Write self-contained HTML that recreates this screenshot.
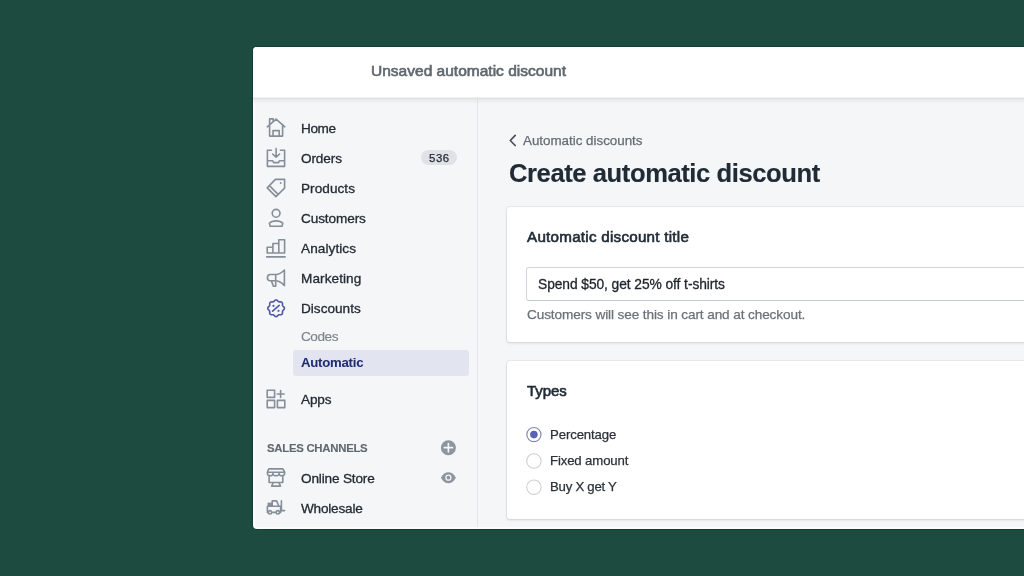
<!DOCTYPE html>
<html><head><meta charset="utf-8">
<style>
*{margin:0;padding:0;box-sizing:border-box}
html,body{width:1024px;height:576px;overflow:hidden;background:#1e4b3f;font-family:"Liberation Sans",sans-serif;position:relative}
.b{position:absolute}
.t{position:absolute;white-space:nowrap;line-height:1;will-change:transform}
.ov{position:absolute;left:0;top:0}
</style></head><body>
<div class="b" style="left:251.5px;top:45.5px;width:800px;height:484px;border-radius:5px;background:rgba(0,20,10,.25)"></div>
<div class="b" style="left:253px;top:47px;width:800px;height:481.5px;border-radius:4px;background:#fbfdfd;overflow:hidden">
  <div class="b" style="left:2px;top:50px;width:798px;height:429.5px;background:#f4f6f8"></div>
  <div class="b" style="left:223.5px;top:50px;width:1px;height:429.5px;background:#e3e6e9"></div>
  <div class="b" style="left:0;top:52px;width:800px;height:5px;background:linear-gradient(rgba(0,0,0,.055),rgba(0,0,0,0))"></div>
  <div class="b" style="left:0;top:0;width:800px;height:50px;background:#fff"></div>
  <div class="b" style="left:0;top:50px;width:800px;height:1px;background:#f0f1f3"></div>
  <div class="b" style="left:0;top:51px;width:800px;height:1px;background:#dfe1e4"></div>
</div>
<div class="b" style="left:293px;top:349.6px;width:176px;height:26px;border-radius:3px;background:#e2e5f0"></div>
<div class="b" style="left:421px;top:149.5px;width:36px;height:15px;border-radius:8px;background:#dfe3e8"></div>
<div class="b" style="left:507px;top:207px;width:600px;height:135px;border-radius:3px;background:#fff;box-shadow:0 0 0 1px rgba(63,63,68,.06),0 1px 3px rgba(63,63,68,.16)"></div>
<div class="b" style="left:507px;top:360.6px;width:600px;height:158.4px;border-radius:3px;background:#fff;box-shadow:0 0 0 1px rgba(63,63,68,.06),0 1px 3px rgba(63,63,68,.16)"></div>
<div class="b" style="left:526.4px;top:267px;width:600px;height:34px;border-radius:3px;background:#fff;border:1px solid #d2d6da;border-bottom-color:#c4c9ce"></div>
<div class="t" style="left:370.70px;top:63.38px;font-size:15.5px;font-weight:normal;color:#5f676f;letter-spacing:0.012px;-webkit-text-stroke:0.65px #5f676f;">Unsaved automatic discount</div>
<div class="t" style="left:300.50px;top:121.78px;font-size:13.6px;font-weight:normal;color:#232b34;letter-spacing:-0.433px;-webkit-text-stroke:0.3px #232b34;">Home</div>
<div class="t" style="left:300.50px;top:151.78px;font-size:13.6px;font-weight:normal;color:#232b34;letter-spacing:-0.120px;-webkit-text-stroke:0.3px #232b34;">Orders</div>
<div class="t" style="left:300.50px;top:181.88px;font-size:13.6px;font-weight:normal;color:#232b34;letter-spacing:0.043px;-webkit-text-stroke:0.3px #232b34;">Products</div>
<div class="t" style="left:300.50px;top:211.88px;font-size:13.6px;font-weight:normal;color:#232b34;letter-spacing:-0.100px;-webkit-text-stroke:0.3px #232b34;">Customers</div>
<div class="t" style="left:300.50px;top:241.88px;font-size:13.6px;font-weight:normal;color:#232b34;letter-spacing:0.075px;-webkit-text-stroke:0.3px #232b34;">Analytics</div>
<div class="t" style="left:300.50px;top:271.88px;font-size:13.6px;font-weight:normal;color:#232b34;letter-spacing:0.075px;-webkit-text-stroke:0.3px #232b34;">Marketing</div>
<div class="t" style="left:300.50px;top:302.28px;font-size:13.6px;font-weight:normal;color:#232b34;letter-spacing:0.012px;-webkit-text-stroke:0.3px #232b34;">Discounts</div>
<div class="t" style="left:300.50px;top:392.68px;font-size:13.6px;font-weight:normal;color:#232b34;letter-spacing:-0.167px;-webkit-text-stroke:0.3px #232b34;">Apps</div>
<div class="t" style="left:300.50px;top:471.88px;font-size:13.6px;font-weight:normal;color:#232b34;letter-spacing:-0.164px;-webkit-text-stroke:0.3px #232b34;">Online Store</div>
<div class="t" style="left:300.50px;top:501.98px;font-size:13.6px;font-weight:normal;color:#232b34;letter-spacing:-0.213px;-webkit-text-stroke:0.3px #232b34;">Wholesale</div>
<div class="t" style="left:300.50px;top:330.28px;font-size:13.6px;font-weight:normal;color:#7b838b;letter-spacing:-0.450px;-webkit-text-stroke:0.15px #7b838b;">Codes</div>
<div class="t" style="left:301.00px;top:356.42px;font-size:13.2px;font-weight:bold;color:#222c70;letter-spacing:-0.250px;-webkit-text-stroke:0.05px #222c70;">Automatic</div>
<div class="t" style="left:267.20px;top:442.75px;font-size:11.4px;font-weight:bold;color:#60686f;letter-spacing:-0.285px;-webkit-text-stroke:0.1px #60686f;">SALES CHANNELS</div>
<div class="t" style="left:429.30px;top:152.55px;font-size:11.4px;font-weight:normal;color:#1f262e;letter-spacing:0.600px;-webkit-text-stroke:0.25px #1f262e;">536</div>
<div class="t" style="left:523.10px;top:134.45px;font-size:13.4px;font-weight:normal;color:#646c74;letter-spacing:-0.017px;-webkit-text-stroke:0.25px #646c74;">Automatic discounts</div>
<div class="t" style="left:508.70px;top:160.52px;font-size:25.6px;font-weight:bold;color:#212b36;letter-spacing:-0.425px;-webkit-text-stroke:0.15px #212b36;">Create automatic discount</div>
<div class="t" style="left:527.00px;top:228.83px;font-size:15.2px;font-weight:normal;color:#212b36;letter-spacing:0.248px;-webkit-text-stroke:0.6px #212b36;">Automatic discount title</div>
<div class="t" style="left:538.40px;top:278.12px;font-size:13.8px;font-weight:normal;color:#1f252c;letter-spacing:-0.073px;-webkit-text-stroke:0.3px #1f252c;">Spend $50, get 25% off t-shirts</div>
<div class="t" style="left:526.80px;top:307.68px;font-size:13.6px;font-weight:normal;color:#697179;letter-spacing:-0.106px;-webkit-text-stroke:0.25px #697179;">Customers will see this in cart and at checkout.</div>
<div class="t" style="left:527.00px;top:383.20px;font-size:15px;font-weight:normal;color:#212b36;letter-spacing:-0.075px;-webkit-text-stroke:0.6px #212b36;">Types</div>
<div class="t" style="left:549.50px;top:427.57px;font-size:13.2px;font-weight:normal;color:#2b3238;letter-spacing:-0.122px;-webkit-text-stroke:0.25px #2b3238;">Percentage</div>
<div class="t" style="left:549.50px;top:453.92px;font-size:13.2px;font-weight:normal;color:#2b3238;letter-spacing:-0.136px;-webkit-text-stroke:0.25px #2b3238;">Fixed amount</div>
<div class="t" style="left:549.50px;top:480.32px;font-size:13.2px;font-weight:normal;color:#2b3238;letter-spacing:-0.250px;-webkit-text-stroke:0.25px #2b3238;">Buy X get Y</div>

<svg class="ov" width="1024" height="576" viewBox="0 0 1024 576" fill="none" stroke="#868f99" stroke-width="1.6" stroke-linejoin="round" stroke-linecap="round">
<!-- home -->
<path d="M267.3 126.8 L276.1 119.2 L284.8 126.8 M269.6 124.6 V136.1 H282.6 V124.6 M269.6 124.6 V118.9 H273.2 V121.6 M273 136.1 V130.6 H279.2 V136.1"/>
<!-- orders -->
<path d="M271.4 150.3 H267.4 V166.4 H284.6 V150.3 H280.4 M267.4 160.8 H272.8 L273.6 162.6 H278.6 L279.4 160.8 H284.6 M276.1 148.6 V157 M272.6 154 L276.1 157.2 L279.6 154"/>
<!-- products -->
<path d="M275.4 179.4 H284.6 V188.2 L275.9 196.6 L267.2 187.9 Z M270.4 186.6 L277.4 193.6"/>
<circle cx="280.7" cy="183" r="0.9" fill="#868f99" stroke="none"/>
<!-- customers -->
<circle cx="276.1" cy="213.3" r="3.9"/>
<path d="M270.2 226.2 H282 L282.8 223.3 C281.3 221.7 279 220.9 276.1 220.9 C273.2 220.9 270.9 221.7 269.4 223.3 Z"/>
<!-- analytics -->
<path d="M267.2 253 V247.2 H272.9 V253 Z M272.9 253 V243.5 H278.8 V253 M278.8 253 V239.8 H284.6 V253 H267.2"/>
<path d="M266.8 256.9 H285" stroke-width="1.9"/>
<!-- marketing -->
<path d="M284.4 270 V285.6 C281 282 278 280.8 275.6 280.8 H270.2 C268.4 280.8 267.4 279.4 267.4 277.8 C267.4 276 268.4 274.5 270.2 274.5 H276.4 C279 274.5 281.6 272.6 284.4 270 Z M275.7 274.6 V286.2 H273.4 L271.4 280.9"/>
<!-- discounts -->
<path stroke="#525aa6" d="M276.10 299.95 L276.14 299.95 L276.17 299.95 L276.21 299.95 L276.25 299.96 L276.28 299.96 L276.32 299.97 L276.35 299.97 L276.39 299.98 L276.43 299.99 L276.46 300.00 L276.50 300.01 L276.53 300.02 L276.57 300.03 L276.61 300.04 L276.64 300.05 L276.68 300.07 L276.71 300.08 L276.75 300.10 L276.78 300.12 L276.81 300.13 L276.85 300.15 L276.88 300.17 L276.92 300.19 L276.95 300.21 L276.98 300.23 L277.02 300.25 L277.05 300.27 L277.08 300.30 L277.12 300.32 L277.15 300.34 L277.18 300.37 L277.21 300.39 L277.24 300.42 L277.27 300.44 L277.31 300.47 L277.34 300.50 L277.37 300.52 L277.40 300.55 L277.43 300.58 L277.46 300.61 L277.49 300.63 L277.52 300.66 L277.54 300.69 L277.57 300.72 L277.60 300.75 L277.63 300.78 L277.66 300.81 L277.69 300.83 L277.71 300.86 L277.74 300.89 L277.77 300.92 L277.80 300.95 L277.82 300.98 L277.85 301.01 L277.88 301.04 L277.90 301.06 L277.93 301.09 L277.96 301.12 L277.98 301.15 L278.01 301.18 L278.03 301.20 L278.06 301.23 L278.09 301.26 L278.11 301.28 L278.14 301.31 L278.16 301.33 L278.19 301.36 L278.21 301.38 L278.24 301.41 L278.27 301.43 L278.29 301.45 L278.32 301.48 L278.34 301.50 L278.37 301.52 L278.39 301.54 L278.42 301.56 L278.45 301.58 L278.47 301.60 L278.50 301.62 L278.52 301.64 L278.55 301.66 L278.58 301.67 L278.60 301.69 L278.63 301.70 L278.66 301.72 L278.69 301.73 L278.71 301.75 L278.74 301.76 L278.77 301.77 L278.80 301.79 L278.83 301.80 L278.86 301.81 L278.88 301.82 L278.91 301.83 L278.94 301.84 L278.97 301.85 L279.00 301.85 L279.03 301.86 L279.06 301.87 L279.10 301.88 L279.13 301.88 L279.16 301.89 L279.19 301.89 L279.22 301.90 L279.26 301.90 L279.29 301.90 L279.32 301.91 L279.36 301.91 L279.39 301.91 L279.43 301.91 L279.46 301.91 L279.50 301.91 L279.53 301.91 L279.57 301.92 L279.60 301.92 L279.64 301.92 L279.68 301.92 L279.71 301.91 L279.75 301.91 L279.79 301.91 L279.83 301.91 L279.86 301.91 L279.90 301.91 L279.94 301.91 L279.98 301.91 L280.02 301.91 L280.06 301.90 L280.10 301.90 L280.14 301.90 L280.18 301.90 L280.22 301.90 L280.26 301.90 L280.30 301.90 L280.34 301.90 L280.38 301.90 L280.42 301.90 L280.46 301.90 L280.50 301.90 L280.54 301.90 L280.58 301.90 L280.62 301.90 L280.66 301.90 L280.70 301.91 L280.74 301.91 L280.78 301.91 L280.82 301.91 L280.87 301.92 L280.91 301.92 L280.95 301.93 L280.99 301.93 L281.02 301.94 L281.06 301.95 L281.10 301.95 L281.14 301.96 L281.18 301.97 L281.22 301.98 L281.26 301.99 L281.30 302.00 L281.33 302.01 L281.37 302.02 L281.41 302.03 L281.44 302.05 L281.48 302.06 L281.51 302.07 L281.55 302.09 L281.58 302.10 L281.62 302.12 L281.65 302.14 L281.68 302.15 L281.71 302.17 L281.75 302.19 L281.78 302.21 L281.81 302.23 L281.84 302.25 L281.87 302.28 L281.90 302.30 L281.92 302.32 L281.95 302.35 L281.98 302.37 L282.00 302.40 L282.03 302.42 L282.05 302.45 L282.08 302.48 L282.10 302.50 L282.12 302.53 L282.15 302.56 L282.17 302.59 L282.19 302.62 L282.21 302.65 L282.23 302.69 L282.25 302.72 L282.26 302.75 L282.28 302.78 L282.30 302.82 L282.31 302.85 L282.33 302.89 L282.34 302.92 L282.35 302.96 L282.37 302.99 L282.38 303.03 L282.39 303.07 L282.40 303.10 L282.41 303.14 L282.42 303.18 L282.43 303.22 L282.44 303.26 L282.45 303.30 L282.45 303.34 L282.46 303.38 L282.47 303.41 L282.47 303.45 L282.48 303.49 L282.48 303.53 L282.49 303.58 L282.49 303.62 L282.49 303.66 L282.49 303.70 L282.50 303.74 L282.50 303.78 L282.50 303.82 L282.50 303.86 L282.50 303.90 L282.50 303.94 L282.50 303.98 L282.50 304.02 L282.50 304.06 L282.50 304.10 L282.50 304.14 L282.50 304.18 L282.50 304.22 L282.50 304.26 L282.50 304.30 L282.50 304.34 L282.49 304.38 L282.49 304.42 L282.49 304.46 L282.49 304.50 L282.49 304.54 L282.49 304.57 L282.49 304.61 L282.49 304.65 L282.49 304.69 L282.48 304.72 L282.48 304.76 L282.48 304.80 L282.48 304.83 L282.49 304.87 L282.49 304.90 L282.49 304.94 L282.49 304.97 L282.49 305.01 L282.49 305.04 L282.49 305.08 L282.50 305.11 L282.50 305.14 L282.50 305.18 L282.51 305.21 L282.51 305.24 L282.52 305.27 L282.52 305.30 L282.53 305.34 L282.54 305.37 L282.55 305.40 L282.55 305.43 L282.56 305.46 L282.57 305.49 L282.58 305.52 L282.59 305.54 L282.60 305.57 L282.61 305.60 L282.63 305.63 L282.64 305.66 L282.65 305.69 L282.67 305.71 L282.68 305.74 L282.70 305.77 L282.71 305.80 L282.73 305.82 L282.74 305.85 L282.76 305.88 L282.78 305.90 L282.80 305.93 L282.82 305.95 L282.84 305.98 L282.86 306.01 L282.88 306.03 L282.90 306.06 L282.92 306.08 L282.95 306.11 L282.97 306.13 L282.99 306.16 L283.02 306.19 L283.04 306.21 L283.07 306.24 L283.09 306.26 L283.12 306.29 L283.14 306.31 L283.17 306.34 L283.20 306.37 L283.22 306.39 L283.25 306.42 L283.28 306.44 L283.31 306.47 L283.34 306.50 L283.36 306.52 L283.39 306.55 L283.42 306.58 L283.45 306.60 L283.48 306.63 L283.51 306.66 L283.54 306.69 L283.57 306.71 L283.59 306.74 L283.62 306.77 L283.65 306.80 L283.68 306.83 L283.71 306.86 L283.74 306.88 L283.77 306.91 L283.79 306.94 L283.82 306.97 L283.85 307.00 L283.88 307.03 L283.90 307.06 L283.93 307.09 L283.96 307.13 L283.98 307.16 L284.01 307.19 L284.03 307.22 L284.06 307.25 L284.08 307.28 L284.10 307.32 L284.13 307.35 L284.15 307.38 L284.17 307.42 L284.19 307.45 L284.21 307.48 L284.23 307.52 L284.25 307.55 L284.27 307.59 L284.28 307.62 L284.30 307.65 L284.32 307.69 L284.33 307.72 L284.35 307.76 L284.36 307.79 L284.37 307.83 L284.38 307.87 L284.39 307.90 L284.40 307.94 L284.41 307.97 L284.42 308.01 L284.43 308.05 L284.43 308.08 L284.44 308.12 L284.44 308.15 L284.45 308.19 L284.45 308.23 L284.45 308.26 L284.45 308.30 L284.45 308.34 L284.45 308.37 L284.45 308.41 L284.44 308.45 L284.44 308.48 L284.43 308.52 L284.43 308.55 L284.42 308.59 L284.41 308.63 L284.40 308.66 L284.39 308.70 L284.38 308.73 L284.37 308.77 L284.36 308.81 L284.35 308.84 L284.33 308.88 L284.32 308.91 L284.30 308.95 L284.28 308.98 L284.27 309.01 L284.25 309.05 L284.23 309.08 L284.21 309.12 L284.19 309.15 L284.17 309.18 L284.15 309.22 L284.13 309.25 L284.10 309.28 L284.08 309.32 L284.06 309.35 L284.03 309.38 L284.01 309.41 L283.98 309.44 L283.96 309.47 L283.93 309.51 L283.90 309.54 L283.88 309.57 L283.85 309.60 L283.82 309.63 L283.79 309.66 L283.77 309.69 L283.74 309.72 L283.71 309.74 L283.68 309.77 L283.65 309.80 L283.62 309.83 L283.59 309.86 L283.57 309.89 L283.54 309.91 L283.51 309.94 L283.48 309.97 L283.45 310.00 L283.42 310.02 L283.39 310.05 L283.36 310.08 L283.34 310.10 L283.31 310.13 L283.28 310.16 L283.25 310.18 L283.22 310.21 L283.20 310.23 L283.17 310.26 L283.14 310.29 L283.12 310.31 L283.09 310.34 L283.07 310.36 L283.04 310.39 L283.02 310.41 L282.99 310.44 L282.97 310.47 L282.95 310.49 L282.92 310.52 L282.90 310.54 L282.88 310.57 L282.86 310.59 L282.84 310.62 L282.82 310.65 L282.80 310.67 L282.78 310.70 L282.76 310.72 L282.74 310.75 L282.73 310.78 L282.71 310.80 L282.70 310.83 L282.68 310.86 L282.67 310.89 L282.65 310.91 L282.64 310.94 L282.63 310.97 L282.61 311.00 L282.60 311.03 L282.59 311.06 L282.58 311.08 L282.57 311.11 L282.56 311.14 L282.55 311.17 L282.55 311.20 L282.54 311.23 L282.53 311.26 L282.52 311.30 L282.52 311.33 L282.51 311.36 L282.51 311.39 L282.50 311.42 L282.50 311.46 L282.50 311.49 L282.49 311.52 L282.49 311.56 L282.49 311.59 L282.49 311.63 L282.49 311.66 L282.49 311.70 L282.49 311.73 L282.48 311.77 L282.48 311.80 L282.48 311.84 L282.48 311.88 L282.49 311.91 L282.49 311.95 L282.49 311.99 L282.49 312.03 L282.49 312.06 L282.49 312.10 L282.49 312.14 L282.49 312.18 L282.49 312.22 L282.50 312.26 L282.50 312.30 L282.50 312.34 L282.50 312.38 L282.50 312.42 L282.50 312.46 L282.50 312.50 L282.50 312.54 L282.50 312.58 L282.50 312.62 L282.50 312.66 L282.50 312.70 L282.50 312.74 L282.50 312.78 L282.50 312.82 L282.50 312.86 L282.49 312.90 L282.49 312.94 L282.49 312.98 L282.49 313.02 L282.48 313.07 L282.48 313.11 L282.47 313.15 L282.47 313.19 L282.46 313.22 L282.45 313.26 L282.45 313.30 L282.44 313.34 L282.43 313.38 L282.42 313.42 L282.41 313.46 L282.40 313.50 L282.39 313.53 L282.38 313.57 L282.37 313.61 L282.35 313.64 L282.34 313.68 L282.33 313.71 L282.31 313.75 L282.30 313.78 L282.28 313.82 L282.26 313.85 L282.25 313.88 L282.23 313.91 L282.21 313.95 L282.19 313.98 L282.17 314.01 L282.15 314.04 L282.12 314.07 L282.10 314.10 L282.08 314.12 L282.05 314.15 L282.03 314.18 L282.00 314.20 L281.98 314.23 L281.95 314.25 L281.92 314.28 L281.90 314.30 L281.87 314.32 L281.84 314.35 L281.81 314.37 L281.78 314.39 L281.75 314.41 L281.71 314.43 L281.68 314.45 L281.65 314.46 L281.62 314.48 L281.58 314.50 L281.55 314.51 L281.51 314.53 L281.48 314.54 L281.44 314.55 L281.41 314.57 L281.37 314.58 L281.33 314.59 L281.30 314.60 L281.26 314.61 L281.22 314.62 L281.18 314.63 L281.14 314.64 L281.10 314.65 L281.06 314.65 L281.02 314.66 L280.99 314.67 L280.95 314.67 L280.91 314.68 L280.87 314.68 L280.82 314.69 L280.78 314.69 L280.74 314.69 L280.70 314.69 L280.66 314.70 L280.62 314.70 L280.58 314.70 L280.54 314.70 L280.50 314.70 L280.46 314.70 L280.42 314.70 L280.38 314.70 L280.34 314.70 L280.30 314.70 L280.26 314.70 L280.22 314.70 L280.18 314.70 L280.14 314.70 L280.10 314.70 L280.06 314.70 L280.02 314.69 L279.98 314.69 L279.94 314.69 L279.90 314.69 L279.86 314.69 L279.83 314.69 L279.79 314.69 L279.75 314.69 L279.71 314.69 L279.68 314.68 L279.64 314.68 L279.60 314.68 L279.57 314.68 L279.53 314.69 L279.50 314.69 L279.46 314.69 L279.43 314.69 L279.39 314.69 L279.36 314.69 L279.32 314.69 L279.29 314.70 L279.26 314.70 L279.22 314.70 L279.19 314.71 L279.16 314.71 L279.13 314.72 L279.10 314.72 L279.06 314.73 L279.03 314.74 L279.00 314.75 L278.97 314.75 L278.94 314.76 L278.91 314.77 L278.88 314.78 L278.86 314.79 L278.83 314.80 L278.80 314.81 L278.77 314.83 L278.74 314.84 L278.71 314.85 L278.69 314.87 L278.66 314.88 L278.63 314.90 L278.60 314.91 L278.58 314.93 L278.55 314.94 L278.52 314.96 L278.50 314.98 L278.47 315.00 L278.45 315.02 L278.42 315.04 L278.39 315.06 L278.37 315.08 L278.34 315.10 L278.32 315.12 L278.29 315.15 L278.27 315.17 L278.24 315.19 L278.21 315.22 L278.19 315.24 L278.16 315.27 L278.14 315.29 L278.11 315.32 L278.09 315.34 L278.06 315.37 L278.03 315.40 L278.01 315.42 L277.98 315.45 L277.96 315.48 L277.93 315.51 L277.90 315.54 L277.88 315.56 L277.85 315.59 L277.82 315.62 L277.80 315.65 L277.77 315.68 L277.74 315.71 L277.71 315.74 L277.69 315.77 L277.66 315.79 L277.63 315.82 L277.60 315.85 L277.57 315.88 L277.54 315.91 L277.52 315.94 L277.49 315.97 L277.46 315.99 L277.43 316.02 L277.40 316.05 L277.37 316.08 L277.34 316.10 L277.31 316.13 L277.27 316.16 L277.24 316.18 L277.21 316.21 L277.18 316.23 L277.15 316.26 L277.12 316.28 L277.08 316.30 L277.05 316.33 L277.02 316.35 L276.98 316.37 L276.95 316.39 L276.92 316.41 L276.88 316.43 L276.85 316.45 L276.81 316.47 L276.78 316.48 L276.75 316.50 L276.71 316.52 L276.68 316.53 L276.64 316.55 L276.61 316.56 L276.57 316.57 L276.53 316.58 L276.50 316.59 L276.46 316.60 L276.43 316.61 L276.39 316.62 L276.35 316.63 L276.32 316.63 L276.28 316.64 L276.25 316.64 L276.21 316.65 L276.17 316.65 L276.14 316.65 L276.10 316.65 L276.06 316.65 L276.03 316.65 L275.99 316.65 L275.95 316.64 L275.92 316.64 L275.88 316.63 L275.85 316.63 L275.81 316.62 L275.77 316.61 L275.74 316.60 L275.70 316.59 L275.67 316.58 L275.63 316.57 L275.59 316.56 L275.56 316.55 L275.52 316.53 L275.49 316.52 L275.45 316.50 L275.42 316.48 L275.39 316.47 L275.35 316.45 L275.32 316.43 L275.28 316.41 L275.25 316.39 L275.22 316.37 L275.18 316.35 L275.15 316.33 L275.12 316.30 L275.08 316.28 L275.05 316.26 L275.02 316.23 L274.99 316.21 L274.96 316.18 L274.93 316.16 L274.89 316.13 L274.86 316.10 L274.83 316.08 L274.80 316.05 L274.77 316.02 L274.74 315.99 L274.71 315.97 L274.68 315.94 L274.66 315.91 L274.63 315.88 L274.60 315.85 L274.57 315.82 L274.54 315.79 L274.51 315.77 L274.49 315.74 L274.46 315.71 L274.43 315.68 L274.40 315.65 L274.38 315.62 L274.35 315.59 L274.32 315.56 L274.30 315.54 L274.27 315.51 L274.24 315.48 L274.22 315.45 L274.19 315.42 L274.17 315.40 L274.14 315.37 L274.11 315.34 L274.09 315.32 L274.06 315.29 L274.04 315.27 L274.01 315.24 L273.99 315.22 L273.96 315.19 L273.93 315.17 L273.91 315.15 L273.88 315.12 L273.86 315.10 L273.83 315.08 L273.81 315.06 L273.78 315.04 L273.75 315.02 L273.73 315.00 L273.70 314.98 L273.68 314.96 L273.65 314.94 L273.62 314.93 L273.60 314.91 L273.57 314.90 L273.54 314.88 L273.51 314.87 L273.49 314.85 L273.46 314.84 L273.43 314.83 L273.40 314.81 L273.37 314.80 L273.34 314.79 L273.32 314.78 L273.29 314.77 L273.26 314.76 L273.23 314.75 L273.20 314.75 L273.17 314.74 L273.14 314.73 L273.10 314.72 L273.07 314.72 L273.04 314.71 L273.01 314.71 L272.98 314.70 L272.94 314.70 L272.91 314.70 L272.88 314.69 L272.84 314.69 L272.81 314.69 L272.77 314.69 L272.74 314.69 L272.70 314.69 L272.67 314.69 L272.63 314.68 L272.60 314.68 L272.56 314.68 L272.52 314.68 L272.49 314.69 L272.45 314.69 L272.41 314.69 L272.37 314.69 L272.34 314.69 L272.30 314.69 L272.26 314.69 L272.22 314.69 L272.18 314.69 L272.14 314.70 L272.10 314.70 L272.06 314.70 L272.02 314.70 L271.98 314.70 L271.94 314.70 L271.90 314.70 L271.86 314.70 L271.82 314.70 L271.78 314.70 L271.74 314.70 L271.70 314.70 L271.66 314.70 L271.62 314.70 L271.58 314.70 L271.54 314.70 L271.50 314.69 L271.46 314.69 L271.42 314.69 L271.38 314.69 L271.33 314.68 L271.29 314.68 L271.25 314.67 L271.21 314.67 L271.18 314.66 L271.14 314.65 L271.10 314.65 L271.06 314.64 L271.02 314.63 L270.98 314.62 L270.94 314.61 L270.90 314.60 L270.87 314.59 L270.83 314.58 L270.79 314.57 L270.76 314.55 L270.72 314.54 L270.69 314.53 L270.65 314.51 L270.62 314.50 L270.58 314.48 L270.55 314.46 L270.52 314.45 L270.49 314.43 L270.45 314.41 L270.42 314.39 L270.39 314.37 L270.36 314.35 L270.33 314.32 L270.30 314.30 L270.28 314.28 L270.25 314.25 L270.22 314.23 L270.20 314.20 L270.17 314.18 L270.15 314.15 L270.12 314.12 L270.10 314.10 L270.08 314.07 L270.05 314.04 L270.03 314.01 L270.01 313.98 L269.99 313.95 L269.97 313.91 L269.95 313.88 L269.94 313.85 L269.92 313.82 L269.90 313.78 L269.89 313.75 L269.87 313.71 L269.86 313.68 L269.85 313.64 L269.83 313.61 L269.82 313.57 L269.81 313.53 L269.80 313.50 L269.79 313.46 L269.78 313.42 L269.77 313.38 L269.76 313.34 L269.75 313.30 L269.75 313.26 L269.74 313.22 L269.73 313.19 L269.73 313.15 L269.72 313.11 L269.72 313.07 L269.71 313.02 L269.71 312.98 L269.71 312.94 L269.71 312.90 L269.70 312.86 L269.70 312.82 L269.70 312.78 L269.70 312.74 L269.70 312.70 L269.70 312.66 L269.70 312.62 L269.70 312.58 L269.70 312.54 L269.70 312.50 L269.70 312.46 L269.70 312.42 L269.70 312.38 L269.70 312.34 L269.70 312.30 L269.70 312.26 L269.71 312.22 L269.71 312.18 L269.71 312.14 L269.71 312.10 L269.71 312.06 L269.71 312.03 L269.71 311.99 L269.71 311.95 L269.71 311.91 L269.72 311.88 L269.72 311.84 L269.72 311.80 L269.72 311.77 L269.71 311.73 L269.71 311.70 L269.71 311.66 L269.71 311.63 L269.71 311.59 L269.71 311.56 L269.71 311.52 L269.70 311.49 L269.70 311.46 L269.70 311.42 L269.69 311.39 L269.69 311.36 L269.68 311.33 L269.68 311.30 L269.67 311.26 L269.66 311.23 L269.65 311.20 L269.65 311.17 L269.64 311.14 L269.63 311.11 L269.62 311.08 L269.61 311.06 L269.60 311.03 L269.59 311.00 L269.57 310.97 L269.56 310.94 L269.55 310.91 L269.53 310.89 L269.52 310.86 L269.50 310.83 L269.49 310.80 L269.47 310.78 L269.46 310.75 L269.44 310.72 L269.42 310.70 L269.40 310.67 L269.38 310.65 L269.36 310.62 L269.34 310.59 L269.32 310.57 L269.30 310.54 L269.28 310.52 L269.25 310.49 L269.23 310.47 L269.21 310.44 L269.18 310.41 L269.16 310.39 L269.13 310.36 L269.11 310.34 L269.08 310.31 L269.06 310.29 L269.03 310.26 L269.00 310.23 L268.98 310.21 L268.95 310.18 L268.92 310.16 L268.89 310.13 L268.86 310.10 L268.84 310.08 L268.81 310.05 L268.78 310.02 L268.75 310.00 L268.72 309.97 L268.69 309.94 L268.66 309.91 L268.63 309.89 L268.61 309.86 L268.58 309.83 L268.55 309.80 L268.52 309.77 L268.49 309.74 L268.46 309.72 L268.43 309.69 L268.41 309.66 L268.38 309.63 L268.35 309.60 L268.32 309.57 L268.30 309.54 L268.27 309.51 L268.24 309.47 L268.22 309.44 L268.19 309.41 L268.17 309.38 L268.14 309.35 L268.12 309.32 L268.10 309.28 L268.07 309.25 L268.05 309.22 L268.03 309.18 L268.01 309.15 L267.99 309.12 L267.97 309.08 L267.95 309.05 L267.93 309.01 L267.92 308.98 L267.90 308.95 L267.88 308.91 L267.87 308.88 L267.85 308.84 L267.84 308.81 L267.83 308.77 L267.82 308.73 L267.81 308.70 L267.80 308.66 L267.79 308.63 L267.78 308.59 L267.77 308.55 L267.77 308.52 L267.76 308.48 L267.76 308.45 L267.75 308.41 L267.75 308.37 L267.75 308.34 L267.75 308.30 L267.75 308.26 L267.75 308.23 L267.75 308.19 L267.76 308.15 L267.76 308.12 L267.77 308.08 L267.77 308.05 L267.78 308.01 L267.79 307.97 L267.80 307.94 L267.81 307.90 L267.82 307.87 L267.83 307.83 L267.84 307.79 L267.85 307.76 L267.87 307.72 L267.88 307.69 L267.90 307.65 L267.92 307.62 L267.93 307.59 L267.95 307.55 L267.97 307.52 L267.99 307.48 L268.01 307.45 L268.03 307.42 L268.05 307.38 L268.07 307.35 L268.10 307.32 L268.12 307.28 L268.14 307.25 L268.17 307.22 L268.19 307.19 L268.22 307.16 L268.24 307.13 L268.27 307.09 L268.30 307.06 L268.32 307.03 L268.35 307.00 L268.38 306.97 L268.41 306.94 L268.43 306.91 L268.46 306.88 L268.49 306.86 L268.52 306.83 L268.55 306.80 L268.58 306.77 L268.61 306.74 L268.63 306.71 L268.66 306.69 L268.69 306.66 L268.72 306.63 L268.75 306.60 L268.78 306.58 L268.81 306.55 L268.84 306.52 L268.86 306.50 L268.89 306.47 L268.92 306.44 L268.95 306.42 L268.98 306.39 L269.00 306.37 L269.03 306.34 L269.06 306.31 L269.08 306.29 L269.11 306.26 L269.13 306.24 L269.16 306.21 L269.18 306.19 L269.21 306.16 L269.23 306.13 L269.25 306.11 L269.28 306.08 L269.30 306.06 L269.32 306.03 L269.34 306.01 L269.36 305.98 L269.38 305.95 L269.40 305.93 L269.42 305.90 L269.44 305.88 L269.46 305.85 L269.47 305.82 L269.49 305.80 L269.50 305.77 L269.52 305.74 L269.53 305.71 L269.55 305.69 L269.56 305.66 L269.57 305.63 L269.59 305.60 L269.60 305.57 L269.61 305.54 L269.62 305.52 L269.63 305.49 L269.64 305.46 L269.65 305.43 L269.65 305.40 L269.66 305.37 L269.67 305.34 L269.68 305.30 L269.68 305.27 L269.69 305.24 L269.69 305.21 L269.70 305.18 L269.70 305.14 L269.70 305.11 L269.71 305.08 L269.71 305.04 L269.71 305.01 L269.71 304.97 L269.71 304.94 L269.71 304.90 L269.71 304.87 L269.72 304.83 L269.72 304.80 L269.72 304.76 L269.72 304.72 L269.71 304.69 L269.71 304.65 L269.71 304.61 L269.71 304.57 L269.71 304.54 L269.71 304.50 L269.71 304.46 L269.71 304.42 L269.71 304.38 L269.70 304.34 L269.70 304.30 L269.70 304.26 L269.70 304.22 L269.70 304.18 L269.70 304.14 L269.70 304.10 L269.70 304.06 L269.70 304.02 L269.70 303.98 L269.70 303.94 L269.70 303.90 L269.70 303.86 L269.70 303.82 L269.70 303.78 L269.70 303.74 L269.71 303.70 L269.71 303.66 L269.71 303.62 L269.71 303.58 L269.72 303.53 L269.72 303.49 L269.73 303.45 L269.73 303.41 L269.74 303.38 L269.75 303.34 L269.75 303.30 L269.76 303.26 L269.77 303.22 L269.78 303.18 L269.79 303.14 L269.80 303.10 L269.81 303.07 L269.82 303.03 L269.83 302.99 L269.85 302.96 L269.86 302.92 L269.87 302.89 L269.89 302.85 L269.90 302.82 L269.92 302.78 L269.94 302.75 L269.95 302.72 L269.97 302.69 L269.99 302.65 L270.01 302.62 L270.03 302.59 L270.05 302.56 L270.08 302.53 L270.10 302.50 L270.12 302.48 L270.15 302.45 L270.17 302.42 L270.20 302.40 L270.22 302.37 L270.25 302.35 L270.28 302.32 L270.30 302.30 L270.33 302.28 L270.36 302.25 L270.39 302.23 L270.42 302.21 L270.45 302.19 L270.49 302.17 L270.52 302.15 L270.55 302.14 L270.58 302.12 L270.62 302.10 L270.65 302.09 L270.69 302.07 L270.72 302.06 L270.76 302.05 L270.79 302.03 L270.83 302.02 L270.87 302.01 L270.90 302.00 L270.94 301.99 L270.98 301.98 L271.02 301.97 L271.06 301.96 L271.10 301.95 L271.14 301.95 L271.18 301.94 L271.21 301.93 L271.25 301.93 L271.29 301.92 L271.33 301.92 L271.38 301.91 L271.42 301.91 L271.46 301.91 L271.50 301.91 L271.54 301.90 L271.58 301.90 L271.62 301.90 L271.66 301.90 L271.70 301.90 L271.74 301.90 L271.78 301.90 L271.82 301.90 L271.86 301.90 L271.90 301.90 L271.94 301.90 L271.98 301.90 L272.02 301.90 L272.06 301.90 L272.10 301.90 L272.14 301.90 L272.18 301.91 L272.22 301.91 L272.26 301.91 L272.30 301.91 L272.34 301.91 L272.37 301.91 L272.41 301.91 L272.45 301.91 L272.49 301.91 L272.52 301.92 L272.56 301.92 L272.60 301.92 L272.63 301.92 L272.67 301.91 L272.70 301.91 L272.74 301.91 L272.77 301.91 L272.81 301.91 L272.84 301.91 L272.88 301.91 L272.91 301.90 L272.94 301.90 L272.98 301.90 L273.01 301.89 L273.04 301.89 L273.07 301.88 L273.10 301.88 L273.14 301.87 L273.17 301.86 L273.20 301.85 L273.23 301.85 L273.26 301.84 L273.29 301.83 L273.32 301.82 L273.34 301.81 L273.37 301.80 L273.40 301.79 L273.43 301.77 L273.46 301.76 L273.49 301.75 L273.51 301.73 L273.54 301.72 L273.57 301.70 L273.60 301.69 L273.62 301.67 L273.65 301.66 L273.68 301.64 L273.70 301.62 L273.73 301.60 L273.75 301.58 L273.78 301.56 L273.81 301.54 L273.83 301.52 L273.86 301.50 L273.88 301.48 L273.91 301.45 L273.93 301.43 L273.96 301.41 L273.99 301.38 L274.01 301.36 L274.04 301.33 L274.06 301.31 L274.09 301.28 L274.11 301.26 L274.14 301.23 L274.17 301.20 L274.19 301.18 L274.22 301.15 L274.24 301.12 L274.27 301.09 L274.30 301.06 L274.32 301.04 L274.35 301.01 L274.38 300.98 L274.40 300.95 L274.43 300.92 L274.46 300.89 L274.49 300.86 L274.51 300.83 L274.54 300.81 L274.57 300.78 L274.60 300.75 L274.63 300.72 L274.66 300.69 L274.68 300.66 L274.71 300.63 L274.74 300.61 L274.77 300.58 L274.80 300.55 L274.83 300.52 L274.86 300.50 L274.89 300.47 L274.93 300.44 L274.96 300.42 L274.99 300.39 L275.02 300.37 L275.05 300.34 L275.08 300.32 L275.12 300.30 L275.15 300.27 L275.18 300.25 L275.22 300.23 L275.25 300.21 L275.28 300.19 L275.32 300.17 L275.35 300.15 L275.39 300.13 L275.42 300.12 L275.45 300.10 L275.49 300.08 L275.52 300.07 L275.56 300.05 L275.59 300.04 L275.63 300.03 L275.67 300.02 L275.70 300.01 L275.74 300.00 L275.77 299.99 L275.81 299.98 L275.85 299.97 L275.88 299.97 L275.92 299.96 L275.95 299.96 L275.99 299.95 L276.03 299.95 L276.06 299.95 L276.10 299.95 Z"/>
<path stroke="#525aa6" d="M272.6 311.2 L279.2 305.4"/>
<circle cx="273.5" cy="305.9" r="1.1" fill="#525aa6" stroke="none"/>
<circle cx="278.5" cy="310.8" r="1.1" fill="#525aa6" stroke="none"/>
<!-- apps -->
<rect x="267.2" y="390.2" width="7.4" height="7.2"/>
<rect x="267.2" y="400.4" width="7.4" height="7.2"/>
<rect x="277.4" y="400.4" width="7.4" height="7.2"/>
<path d="M277.2 394 H284.1 M280.6 390.6 V397.4"/>
<!-- online store -->
<path d="M268.8 468.9 H282.9 L284.6 472 V473.4 C284.6 474.6 283.4 475.7 281.8 475.7 C280.4 475.7 279.1 474.6 279.1 473.4 C279.1 474.6 277.6 475.7 276 475.7 C274.4 475.7 272.9 474.6 272.9 473.4 C272.9 474.6 271.6 475.7 270.2 475.7 C268.6 475.7 267.4 474.6 267.4 473.4 V472 Z M267.6 472.2 H284.4 M269.1 475.6 V482.5 H282.8 V475.6 M273.4 482.5 L271.6 486.1 H280.6 L278.8 482.5"/>
<!-- wholesale -->
<path d="M267.4 506.2 V512.4 H280.6 V506.2 Z M272.2 506.2 V500.9 H276.6 L278.9 506.2 M281.4 500.9 V510.6 H284.6"/>
<rect x="267.6" y="502.6" width="4.4" height="3.6" fill="#868f99" stroke="none"/>
<circle cx="270" cy="512.3" r="1.7" fill="#f4f6f8"/>
<circle cx="277.8" cy="512.3" r="1.7" fill="#f4f6f8"/>
<!-- plus circle -->
<circle cx="448.4" cy="447.7" r="7.5" fill="#8d959e" stroke="none"/>
<path d="M444.3 447.7 H452.5 M448.4 443.6 V451.8" stroke="#f4f6f8" stroke-width="1.7"/>
<!-- eye -->
<path d="M440.9 477.7 C443 474 445.6 472.2 448.4 472.2 C451.2 472.2 453.8 474 455.9 477.7 C453.8 481.4 451.2 483.2 448.4 483.2 C445.6 483.2 443 481.4 440.9 477.7 Z" fill="#8d959e" stroke="none"/>
<circle cx="448.4" cy="477.7" r="2.5" stroke="#f4f6f8" stroke-width="1.3" fill="#8d959e"/>
<!-- chevron -->
<path d="M515.2 135.4 L510.3 140.5 L515.2 145.5" stroke="#454f5b" stroke-width="1.7"/>
<!-- radios -->
<circle cx="533.9" cy="434.6" r="7.1" stroke="#8489b0" stroke-width="1.2" fill="#fff"/>
<circle cx="533.9" cy="434.6" r="3.8" fill="#5862b5" stroke="none"/>
<circle cx="533.9" cy="461" r="7.2" stroke="#cdd0d4" stroke-width="1.1" fill="#fff"/>
<circle cx="533.9" cy="487.2" r="7.2" stroke="#cdd0d4" stroke-width="1.1" fill="#fff"/>
</svg>

</body></html>
